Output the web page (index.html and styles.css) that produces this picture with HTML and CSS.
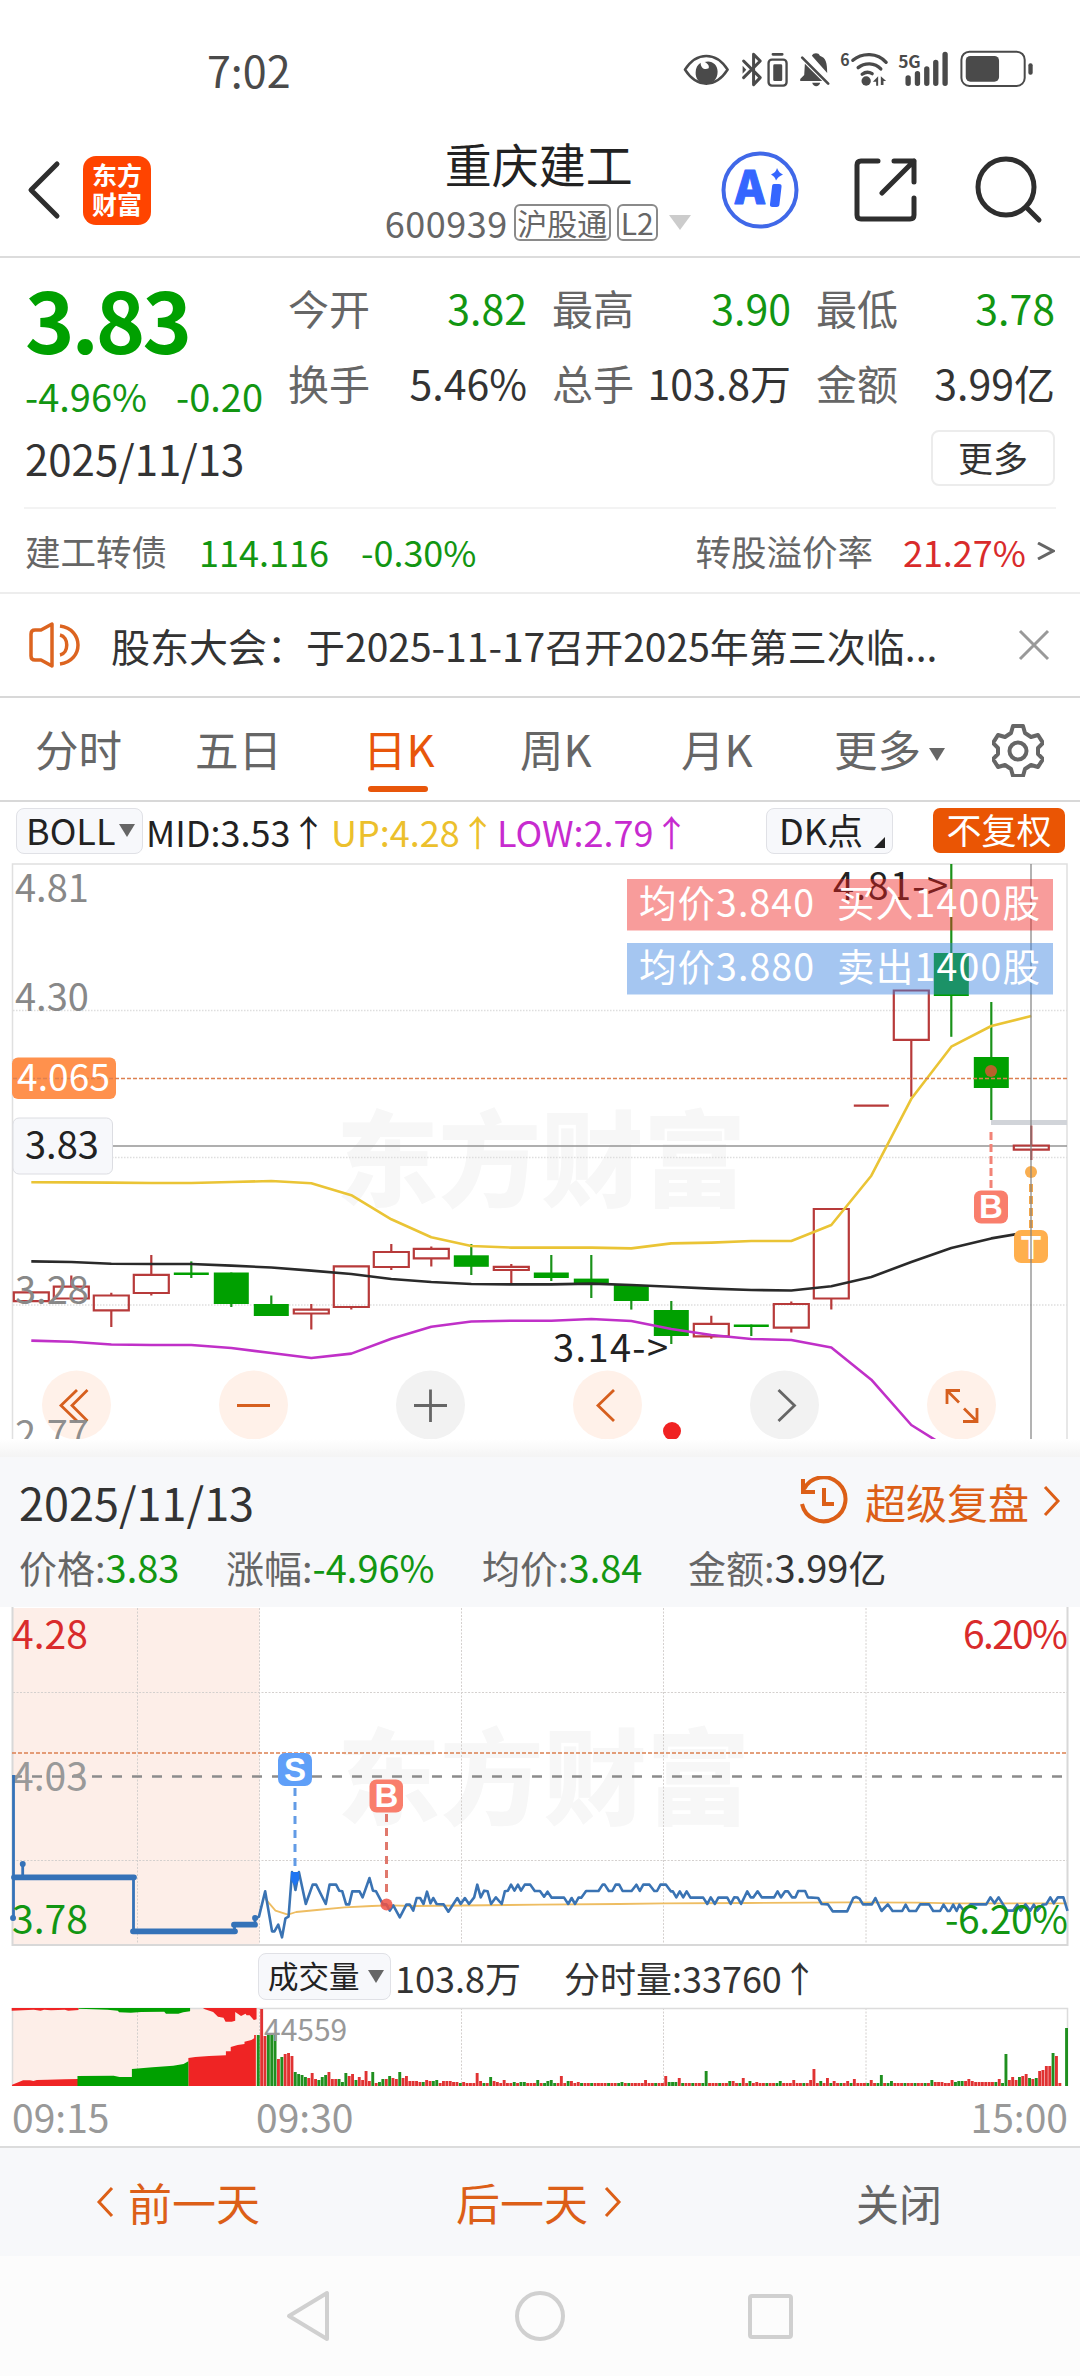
FILE: index.html
```html
<!DOCTYPE html>
<html lang="zh-CN">
<head>
<meta charset="utf-8">
<title>重庆建工 600939</title>
<link rel="stylesheet" href="styles.css">
</head>
<body>
<div class="status">
  <span class="clock">7:02</span>
  <svg class="status-icons" viewBox="60 50 1070 130">
    <g fill="none" stroke="#4a4a4a" stroke-width="8" stroke-linecap="round" stroke-linejoin="round">
      <path d="M74 118C92 90 114 77 138 77s46 13 64 41c-18 28-40 42-64 42s-46-14-64-42z"/>
      <path d="M250 92l50 50-20 21V72l20 20-50 50" stroke-width="9"/>
      <rect x="325" y="88" width="54" height="78" rx="10" stroke-width="7"/>
      <path d="M338 72h28M426 82l78 78" />
      <path d="M578 90c28-24 74-24 100 6M594 112c20-16 50-16 68 4M606 132c10-8 20-8 30-2" stroke-width="10"/>
      <rect x="904" y="64" width="190" height="103" rx="24" stroke-width="6"/>
      <path d="M744 143v16M772 130v29M800 116v43M827 96v63M855 72v87" stroke-width="16"/>
    </g>
    <g fill="#4a4a4a">
      <path d="M121 97c0 16 12 23 24 17 3-8-3-15-12-19 20-7 39 7 39 29 0 24-16 36-36 36s-31-16-30-34c0-14 6-23 15-29z"/>
      <rect x="339" y="102" width="27" height="50" rx="4"/>
      <path d="M247 106l11 12-11 12z"/>
      <path d="M455 76c4-10 21-10 24 0 18 6 22 20 22 52zM434 100l52 52h-66v-6l12-12zM456 157h24c-3 14-21 14-24 0z"/>
      <circle cx="618" cy="152" r="14"/>
      <path d="M638 154l16-16v28h-6v-12zM662 138l16 14h-8v12h-8z"/>
      <rect x="917" y="77" width="100" height="77" rx="14"/>
      <rect x="1105" y="99" width="13" height="34" rx="6"/>
    </g>
    <text x="540" y="107" class="st-text" textLength="28" lengthAdjust="spacingAndGlyphs">6</text>
    <text x="714" y="113" class="st-text" textLength="68" lengthAdjust="spacingAndGlyphs">5G</text>
  </svg>
</div>

<header class="header">
  <svg class="back" viewBox="0 0 36 60"><path d="M32 4L6 30l26 26"/></svg>
  <div class="logo"><span>东方</span><span>财富</span></div>
  <div class="title-box">
    <div class="title">重庆建工</div>
    <div class="code"><span class="code-no">600939</span><span class="tag">沪股通</span><span class="tag tag-l2">L2</span><i class="tri-down"></i></div>
  </div>
  <svg class="ai" viewBox="0 0 80 80">
    <circle cx="40" cy="40" r="36.5"/>
    <text x="15" y="54" class="ai-a">A</text>
    <path d="M52 34h7q3 0 2.500 3l-2 17q0 3-3 3h-4q-3 0-2.500-3l2-17q0-3 2-3z"/>
    <path d="M57 18q2 5 6 6.500q-5 2-7 6q-1-4-5-6q5-2 6-6.500z"/>
  </svg>
  <svg class="share" viewBox="0 0 64 64"><path d="M24 3H7q-4 0-4 4v50q0 4 4 4h49q4 0 4-4V40M40 3h20v21M60 3L28 35"/></svg>
  <svg class="search" viewBox="0 0 68 68"><circle cx="31" cy="31" r="28"/><path d="M51 51l13 13"/></svg>
</header>

<section class="quote">
  <div class="quote-top">
    <div class="price-col">
      <div class="price">3.83</div>
      <div class="chg"><span>-4.96%</span><span>-0.20</span></div>
    </div>
    <div class="stats">
      <div class="stat"><span>今开</span><b class="g">3.82</b></div>
      <div class="stat"><span>最高</span><b class="g">3.90</b></div>
      <div class="stat"><span>最低</span><b class="g">3.78</b></div>
      <div class="stat"><span>换手</span><b>5.46%</b></div>
      <div class="stat"><span>总手</span><b>103.8万</b></div>
      <div class="stat"><span>金额</span><b>3.99亿</b></div>
    </div>
  </div>
  <div class="quote-date"><span>2025/11/13</span><span class="more-btn">更多</span></div>
</section>

<section class="bond">
  <span class="bond-name">建工转债</span><span class="g bond-v">114.116</span><span class="g bond-c">-0.30%</span>
  <span class="bond-name prem">转股溢价率</span><span class="r">21.27%</span>
  <svg class="gt" viewBox="0 0 18 18"><path d="M1 1l15 8-15 8"/></svg>
</section>

<section class="notice">
  <svg class="speaker" viewBox="0 0 52 46"><path d="M2 12q0-4 4-4h6L23 2v42L12 38H6q-4 0-4-4zM31 13c9 2 9 18 0 20M31 4c24 3 24 35 0 38"/></svg>
  <span class="notice-text">股东大会：于2025-11-17召开2025年第三次临...</span>
  <svg class="close" viewBox="0 0 32 32"><path d="M2 2l28 28M30 2L2 30"/></svg>
</section>

<nav class="tabs">
  <span>分时</span><span>五日</span><span class="on">日K</span><span>周K</span><span>月K</span><span>更多<i class="tri-sm"></i></span>
  <svg class="gear" viewBox="0 0 52 54"><path d="M21 3h10l2 7 6 4 7-2 5 8-5 5v6l5 5-5 8-7-2-6 4-2 7H21l-2-7-6-4-7 2-5-8 5-5v-6l-5-5 5-8 7 2 6-4z"/><circle cx="26" cy="28" r="8.500"/></svg>
</nav>

<section class="indic">
  <span class="pill">BOLL<i class="tri-sm"></i></span>
  <span class="i-mid">MID:3.53<em>↑</em></span><span class="i-up">UP:4.28<em>↑</em></span><span class="i-low">LOW:2.79<em>↑</em></span>
  <span class="pill dk">DK点<i class="corner"></i></span>
  <span class="fuquan">不复权</span>
</section>

<svg class="kline" viewBox="0 859 1080 580">
  <text class="wm" x="336" y="1199" textLength="410" lengthAdjust="spacingAndGlyphs">东方财富</text>
  <path class="grid" d="M13 1010.500H1067M13 1157.500H1067M13 1305H1067"/>
  <path class="frame" d="M12.500 1439V864H1067V1439"/>
  <path class="cross-h" d="M13 1146H1067"/>
  <g id="candles"></g>
  <path d="M991 1122.500H1067" stroke="#d1d4d9" stroke-width="5"/>
  <g id="boll"></g>
  <g class="ylab">
    <text x="15" y="902">4.81</text><text x="15" y="1011">4.30</text><text x="15" y="1304">3.28</text>
  </g>
  <text class="mark" x="833" y="900" textLength="115">4.81-&gt;</text>
  <text class="mark" x="553" y="1362" textLength="115">3.14-&gt;</text>
  <rect x="12" y="1057.500" width="104" height="41.500" rx="6" fill="#ff914d"/>
  <path class="cost" d="M13 1078.500H1067"/>
  <text x="17" y="1091" font-size="37" fill="#fff" textLength="93">4.065</text>
  <rect x="13" y="1118" width="99.500" height="56" rx="6" fill="#f7f8fb" stroke="#dcdde2"/>
  <text x="25" y="1159" font-size="38" fill="#222">3.83</text>
  <circle cx="991" cy="1071" r="6" fill="#b8622a"/>
  <path d="M991 1132V1188" stroke="#f28377" stroke-width="3" stroke-dasharray="8 4"/>
  <rect x="974" y="1190.500" width="34" height="33" rx="7" fill="#f97e6c"/>
  <text class="badge" x="991" y="1218">B</text>
  <circle cx="1031" cy="1172" r="6" fill="#f9ae50"/>
  <path d="M1031 1184V1230" stroke="#f2a64a" stroke-width="4" stroke-dasharray="8 4"/>
  <rect x="1014" y="1230" width="34" height="33" rx="7" fill="#ffaf4d"/>
  <text class="badge" x="1031" y="1259">T</text>
  <path d="M1031 864V1439" stroke="#808080" stroke-opacity=".6" stroke-width="2"/>
  <rect x="627" y="879" width="426" height="51.500" fill="#ef201e" fill-opacity=".444"/>
  <rect x="627" y="943" width="426" height="51.500" fill="#3b82e0" fill-opacity=".46"/>
  <g class="trade">
    <text x="639" y="917" textLength="175">均价3.840</text><text x="837" y="917" textLength="203">买入1400股</text>
    <text x="639" y="981" textLength="175">均价3.880</text><text x="837" y="981" textLength="203">卖出1400股</text>
  </g>
  <g fill="#fff1e9"><circle cx="76.500" cy="1405" r="34.500"/><circle cx="253.500" cy="1405" r="34.500"/><circle cx="607.500" cy="1405" r="34.500"/><circle cx="961.500" cy="1405" r="34.500"/></g>
  <g fill="#f2f2f2"><circle cx="430.500" cy="1405" r="34.500"/><circle cx="784.500" cy="1405" r="34.500"/></g>
  <path class="ic-o" d="M77 1390L61 1405.500l16 15.500M87.500 1390L72 1405.500l15.500 15.500M237 1405.500h33M614 1390l-16 15.500 16 15.500M947 1404v-13.500h13M947 1390.500l12 12M977 1408v13.500h-14M977 1421.500l-13-13"/>
  <path class="ic-g" d="M414 1405.500h33M430.500 1389.500v32.500M778.500 1390l16 15.500-16 15.500"/>
  <circle cx="672" cy="1431" r="9" fill="#f02222"/>
  <text class="y-last" x="15" y="1448">2.77</text>
</svg>
<div class="shade"></div>

<section class="replay">
  <div class="replay-head">
    <span class="replay-date">2025/11/13</span>
    <span class="replay-link">
      <svg class="history" viewBox="0 0 50 50"><path d="M5 13A22 22 0 1 1 3 28M4 3v13h12M25 12v16h10"/></svg>
      超级复盘
      <svg class="chev" viewBox="0 0 18 32"><path d="M2 2l13 14L2 30"/></svg>
    </span>
  </div>
  <div class="replay-row">
    <span>价格:<b class="g">3.83</b></span><span>涨幅:<b class="g">-4.96%</b></span><span>均价:<b class="g">3.84</b></span><span>金额:<b>3.99亿</b></span>
  </div>
</section>

<svg class="minute" viewBox="0 1607 1080 341">
  <rect x="13" y="1608" width="246.500" height="337" fill="#fdeee8"/>
  <text class="wm" x="337" y="1817" textLength="413" lengthAdjust="spacingAndGlyphs">东方财富</text>
  <path class="grid2" d="M137.500 1608V1944M259.500 1608V1944M461.500 1608V1944M663.500 1608V1944M866 1608V1944M13 1692.500H1067M13 1860.500H1067"/>
  <path d="M12.500 1607V1945H1067.500V1607" fill="none" stroke="#d8d8d8" stroke-width="2"/>
  <path class="cost" d="M12 1753H1067"/>
  <path d="M12 1776.500H1067" stroke="#8c8c8c" stroke-width="2.500" stroke-dasharray="10 10"/>
  <text class="ml" x="12" y="1791" fill="#999">4.03</text>
  <g class="auction"><path d="M13.500 1775V1918M22.700 1864V1877M133.500 1877V1931M234.500 1931V1925M255 1924V1918H258"/>
  <path class="thick" d="M14 1877.300H134M133 1931.300H235M234 1924.700H255M13 1918h.1M22.700 1864h.1M255 1918h.1"/></g>
  <g transform="translate(0 1590) scale(.34436 .33333)">
    <polyline class="avg" points="770,925 780,938 800,962 836,974 860,966 920,960 1000,952 1080,948 1130,946 1200,948 1568,944 1798,942 1928,940 2168,939 2468,937 2668,938 2768,940 3098,940"/>
    <polyline class="px" points="745,984 752,980 770,904 790,1024 797,1024 808,1004 819,1042 829,985 838,980 848,846 858,900 868,846 888,942 908,884 918,884 946,942 957,884 976,884 985,902 994,904 1005,943 1014,943 1023,904 1044,904 1053,922 1073,864 1083,902 1092,904 1112,943 1122,943 1132,962 1142,946 1161,982 1180,944 1190,944 1200,962 1210,924 1220,924 1230,942 1240,905 1250,940 1258,924 1268,942 1288,943 1302,965 1328,924 1338,942 1350,924 1362,942 1377,922 1386,884 1396,922 1406,902 1416,904 1426,942 1440,922 1457,942 1466,904 1475,902 1484,884 1494,902 1504,884 1513,902 1524,884 1540,884 1553,903 1568,903 1580,920 1590,905 1602,923 1638,923 1650,942 1660,924 1670,942 1680,923 1688,923 1702,903 1738,903 1750,884 1756,884 1768,903 1778,903 1788,884 1798,884 1808,903 1834,903 1848,884 1858,903 1868,884 1886,884 1900,903 1908,903 1918,884 1934,884 1948,904 1954,904 1964,922 1974,904 1984,922 1994,904 2005,923 2042,923 2054,942 2064,922 2076,942 2086,923 2112,923 2122,942 2132,922 2142,923 2152,942 2170,904 2180,922 2188,922 2200,904 2212,922 2248,922 2258,904 2268,922 2280,904 2288,904 2300,922 2310,922 2318,903 2338,903 2346,922 2376,924 2386,942 2404,943 2418,964 2460,964 2478,924 2486,921 2496,926 2506,943 2532,943 2542,924 2560,963 2578,943 2592,963 2620,963 2630,944 2640,963 2660,963 2672,943 2698,943 2710,963 2730,963 2740,944 2752,963 2758,963 2768,944 2778,963 2786,944 2800,964 2818,943 2864,943 2876,922 2888,940 2900,922 2924,962 2942,962 2954,944 2964,962 2978,943 2992,962 3002,944 3012,962 3028,944 3038,943 3050,922 3060,940 3072,922 3088,922 3100,963"/>
  </g>
  <g class="ml">
    <text x="12" y="1649" fill="#d92b2b">4.28</text><text x="1068" y="1649" fill="#d92b2b" text-anchor="end" textLength="105">6.20%</text>
    <text x="12" y="1933.500" fill="#129612">3.78</text><text x="1068" y="1933.500" fill="#129612" text-anchor="end" textLength="123">-6.20%</text>
  </g>
  <path d="M295 1788V1874" stroke="#629be6" stroke-width="3" stroke-dasharray="8 6"/>
  <path d="M291 1872h8v8l-4 6-4-6z" fill="#1f75f2"/>
  <path d="M386.500 1814V1898" stroke="#e0786c" stroke-width="3" stroke-dasharray="8 6"/>
  <circle cx="386.500" cy="1904.500" r="6" fill="#ee5245" fill-opacity=".85"/>
  <rect x="278" y="1753" width="34" height="33" rx="7" fill="#5f9ff8"/><text class="badge" x="295" y="1781">S</text>
  <rect x="369.500" y="1779.500" width="33.500" height="33" rx="7" fill="#f97e6c"/><text class="badge" x="386.500" y="1807">B</text>
</svg>

<section class="vol-head">
  <span class="pill vol">成交量<i class="tri-sm"></i></span><span class="vol-v">103.8万</span><span class="vol-m">分时量:33760<em>↑</em></span>
</section>
<svg class="volume" viewBox="0 2004 1080 84">
  <rect x="13" y="2008" width="246.500" height="78" fill="#fdeee8"/>
  <path class="grid2" d="M137.500 2008V2086M259.500 2008V2086M461.500 2008V2086M663.500 2008V2086M866 2008V2086"/>
  <path d="M12.500 2086V2008.500H1067.500V2086" fill="none" stroke="#dcdcdc" stroke-width="1.500"/>
  <g transform="translate(0 1940) scale(.34436 .33333)">
    <path fill="#ef2424" d="M35 438v-4l20-8 12-5h20l10 2 10-3 30-1 50-1 40-1v21zM547 438v-84l20-3 40-3 49-2v-12h14v-13l20-6 20-3v-7l20-5 8-5v-10h5v153zM34 204h194v6l-30 2-10-3-40 2-20-2-10 3-20-3-64 3zM572 204h173v34l-8 2-12-14h-9l-3-5-13 7-17-12v26l-10 3h-18l-6-12-16-3-14-14-24-8-6-4z"/>
    <path fill="#00a000" d="M225 438v-30l105-1 17 4h36v-24l60-5 60-5 30-5 14-8v74zM228 204h324v10l-20 3-14 4h-36l-5-6-67 1-30 2-34-1-4-5-30-3-40-1-44-2z"/>
  </g>
  <g id="bars"></g>
  <text x="264" y="2040.500" font-size="30" fill="#999">44559</text>
</svg>
<div class="times"><span class="t1">09:15</span><span class="t2">09:30</span><span>15:00</span></div>

<footer class="foot">
  <span class="prev"><svg class="chev" viewBox="0 0 18 32"><path d="M16 2L3 16l13 14"/></svg>前一天</span>
  <span class="next">后一天<svg class="chev" viewBox="0 0 18 32"><path d="M2 2l13 14L2 30"/></svg></span>
  <span class="shut">关闭</span>
</footer>
<div class="sysnav">
  <svg viewBox="0 0 50 54"><path d="M42 4v46L4 27z"/></svg>
  <svg viewBox="0 0 50 54"><circle cx="25" cy="27" r="23"/></svg>
  <svg viewBox="0 0 50 54"><rect x="5" y="7" width="41" height="41" rx="2"/></svg>
</div>
<script src="chart.js"></script>
</body>
</html>
```
FILE: styles.css
```css
* { box-sizing: border-box; }
body { margin: 0; width: 1080px; background: #fff; color: #333; font-family: "Noto Sans CJK SC", "Noto Sans", sans-serif; font-size: 36px; line-height: 1; }
svg { display: block; flex: none; }
b, em, i { font-weight: 400; font-style: normal; }
span { white-space: nowrap; }
.g { color: #129612 !important; }
.r { color: #d92b2b; }

.status { height: 112px; padding: 26px 43px 0 207px; display: flex; align-items: center; justify-content: space-between; }
.clock { font-size: 43px; color: #4a4a4a; }
.status-icons { width: 357px; height: 43.300px; }
.st-text { font: 700 50px "Noto Sans CJK SC", sans-serif; fill: #4a4a4a; }

.header { height: 146px; border-bottom: 2px solid #dcdcdc; display: flex; align-items: center; padding: 12px 37px 0 25px; }
.header svg { fill: none; stroke: #2e2e2e; stroke-width: 5; stroke-linecap: round; stroke-linejoin: round; }
.back { width: 36px; height: 60px; }
.logo { width: 68px; height: 69px; margin-left: 22px; border-radius: 13px; background: #ff4400; color: #fff; display: flex; flex-direction: column; align-items: center; justify-content: center; font-size: 25px; font-weight: 700; line-height: 29px; padding-bottom: 2px; }
.title-box { margin-left: 234px; width: 308px; height: 110px; }
.title { font-size: 47px; line-height: 60px; margin-top: -2px; padding-left: 60px; color: #222; }
.code { display: flex; align-items: center; height: 58px; color: #666; font-size: 36px; }
.code-no { letter-spacing: .5px; }
.tag { border: 2px solid #8a8a8a; border-radius: 6px; height: 37px; width: 97px; line-height: 32px; font-size: 30px; text-align: center; margin-left: 6px; }
.tag-l2 { width: 41px; }
.tri-down { border: 11px solid transparent; border-top: 15px solid #ccc; border-bottom: 0; margin-left: 11px; }
.header .ai { width: 80px; height: 80px; margin-left: 28px; stroke: #4068e8; stroke-width: 4; }
.header .ai path { fill: #3566ff; stroke: none; }
.ai-a { font: 900 45px "Noto Sans CJK SC", sans-serif; fill: #3566ff; stroke: #3566ff; stroke-width: 1; }
.share { width: 64px; height: 64px; margin-left: 54px; }
.search { width: 68px; height: 68px; margin-left: 57px; }

.quote { height: 249px; padding: 0 25px; }
.quote-top { display: flex; height: 162px; }
.price-col { width: 264px; padding-top: 12px; color: #00a000; }
.price { font-size: 84px; font-weight: 700; line-height: 96px; letter-spacing: -3px; }
.chg { display: flex; justify-content: space-between; width: 238px; font-size: 38px; line-height: 58px; color: #129612; margin-top: 1px; }
.stats { flex: 1; display: grid; grid-template-columns: repeat(3, 239px); column-gap: 25px; grid-auto-rows: 75px; padding-top: 12px; }
.stat { display: flex; justify-content: space-between; align-items: center; font-size: 41px; color: #666; }
.stat b { color: #333; }
.quote-date { display: flex; justify-content: space-between; align-items: center; height: 76px; font-size: 42px; }
.more-btn { width: 124px; height: 56px; border: 2px solid #ececec; border-radius: 8px; font-size: 35px; line-height: 49px; text-align: center; }

.bond { height: 85px; margin: 0 24px; border-top: 2px solid #f3f3f3; display: flex; align-items: center; font-size: 36px; padding: 0 1px; }
.bond-name { color: #666; font-size: 35.500px; }
.bond-v { margin-left: 32px; }
.bond-c { margin-left: 32px; }
.prem { margin-left: auto; }
.bond .r { margin-left: 30px; }
.gt { width: 18px; height: 18px; margin-left: 11px; fill: none; stroke: #666; stroke-width: 3; }

.notice { height: 106px; border-top: 2px solid #ededed; border-bottom: 2px solid #d8d8d8; display: flex; align-items: center; padding: 0 30px 0 29px; }
.speaker { width: 52px; height: 46px; fill: none; stroke: #dc6420; stroke-width: 3.500; stroke-linejoin: round; }
.notice-text { font-size: 39px; margin-left: 30px; width: 908px; }
.close { width: 32px; height: 32px; fill: none; stroke: #999; stroke-width: 3; }

.tabs { height: 104px; border-bottom: 2px solid #d8d8d8; display: grid; grid-template-columns: 160px 168px 157px 161px 153px 158px 54px; padding-left: 35px; font-size: 43.500px; color: #666; align-items: center; }
.tabs span { height: 104px; line-height: 102px; }
.tabs .on { color: #e8560a; position: relative; }
.tabs .on::after { content: ""; position: absolute; left: 5px; top: 88px; width: 60px; height: 6px; border-radius: 3px; background: #e8560a; }
.tri-sm { display: inline-block; border: 8px solid transparent; border-top: 13px solid #666; border-bottom: 0; vertical-align: middle; margin: 0 0 2px 8px; }
.gear { width: 52px; height: 54px; fill: none; stroke: #666; stroke-width: 4; stroke-linejoin: round; }

.indic { height: 57px; display: flex; align-items: center; padding-left: 16px; font-size: 36px; }
.pill { display: flex; align-items: center; height: 46px; width: 127px; border: 1.500px solid #e0e1e6; border-radius: 8px; background: #f7f8fb; color: #222; padding: 0 0 3px 9px; }
.pill .tri-sm { margin: 3px 0 0 4px; }
.i-mid { width: 185px; margin-left: 3px; color: #222; }
.i-up { width: 166px; color: #ecc02c; }
.i-low { width: 269px; color: #c72bcf; }
.dk { position: relative; padding-left: 12px; }
.corner { position: absolute; right: 7px; bottom: 5px; border-left: 11px solid transparent; border-bottom: 11px solid #222; }
.fuquan { width: 132px; height: 45px; margin-left: 40px; border-radius: 7px; background: #ea5504; color: #fff; font-size: 35px; line-height: 41px; text-align: center; }

.kline { width: 1080px; height: 580px; }
.wm { font-size: 104px; font-weight: 900; fill: #f7f7f7; }
.grid, .grid2 { fill: none; stroke: #dedede; stroke-width: 1.500; stroke-dasharray: 1.500 1.500; }
.grid2 { stroke: #d4d0ce; stroke-width: 1; stroke-dasharray: 2 1.500; }
.frame { fill: none; stroke: #e0e0e0; stroke-width: 1.500; }
.cross-h { stroke: #959595; stroke-width: 1.500; }
.cost { stroke: #dc8050; stroke-width: 1.500; stroke-dasharray: 4 2; }
.ylab, .y-last { font-size: 38px; fill: #888; }
.y-last { fill-opacity: .95; }
.mark { font-size: 38px; fill: #222; }
.trade { font-size: 37.500px; fill: #fff; }
.badge { font: 700 33px "Liberation Sans", sans-serif; fill: #fff; text-anchor: middle; }
.ic-o, .ic-g { fill: none; stroke: #d65f1e; stroke-width: 2.800; }
.ic-g { stroke: #666; }
.up { fill: none; stroke: #b73a3a; stroke-width: 2.200; }
.down { fill: #00a000; stroke: none; }
.wick-down { stroke: #1a921a; stroke-width: 2.200; }
.boll { fill: none; stroke-width: 2.600; stroke-linejoin: round; }

.shade { height: 18px; background: linear-gradient(#fff, #f4f4f4); }
.replay { height: 150px; background: #f7f8fa; padding: 14px 19px 0 19px; }
.replay-head { display: flex; align-items: center; justify-content: space-between; height: 60px; }
.replay-date { font-size: 45px; }
.replay-link { display: flex; align-items: center; font-size: 41px; color: #dc5f17; }
.history { width: 50px; height: 50px; margin-right: 16px; fill: none; stroke: #dc5f17; stroke-width: 4; }
.chev { width: 18px; height: 32px; fill: none; stroke: #dc5f17; stroke-width: 3; }
.replay-link .chev { margin-left: 14px; }
.replay-row { display: grid; grid-template-columns: 207px 256px 206px auto; font-size: 38px; line-height: 72px; color: #666; }
.replay-row b { color: #333; }

.minute { width: 1080px; height: 341px; }
.ml { font-size: 39px; }
.auction path { fill: none; stroke: #3572b8; stroke-width: 2.800; }
.auction .thick { stroke-width: 5.800; stroke-linecap: round; }
.avg, .px { fill: none; vector-effect: non-scaling-stroke; stroke: #eebd62; stroke-width: 1.800; stroke-linejoin: round; }
.px { stroke: #3a73b3; stroke-width: 2.600; }

.vol-head { height: 56px; display: flex; align-items: center; padding-left: 258px; padding-top: 1px; }
.vol { width: 133px; height: 47px; font-size: 30.500px; }
.vol .tri-sm { margin-left: 8px; }
.vol-v { margin-left: 4px; }
.vol-m { margin-left: 43px; }
.volume { width: 1080px; height: 84px; }
.times { display: flex; height: 58px; padding: 0 12px; font-size: 39px; line-height: 56px; color: #999; }
.t1 { width: 244px; }
.t2 { flex: 1; }

.foot { height: 110px; background: #f7f8fa; border-top: 2px solid #dcdcdc; display: flex; align-items: center; font-size: 44px; color: #dc5f17; }
.foot span { display: flex; align-items: center; }
.prev { margin-left: 96px; width: 360px; }
.prev .chev { margin-right: 14px; }
.next { width: 400px; }
.next .chev { margin-left: 16px; }
.shut { color: #666; font-size: 43px; }
.sysnav { height: 120px; background: #fcfcfc; display: flex; justify-content: center; align-items: center; gap: 180px; }
.sysnav svg { width: 50px; height: 54px; fill: none; stroke: #d0d0d0; stroke-width: 4; stroke-linejoin: round; }
```
FILE: chart.js
```js
const NS = 'http://www.w3.org/2000/svg';
function add(parent, tag, attrs) {
  const el = document.createElementNS(NS, tag);
  for (const k in attrs) el.setAttribute(k, attrs[k]);
  parent.appendChild(el);
}

// [direction, body top, body bottom, wick high, wick low], one per trading day
const days = [
  ['u',1292.4,1301.2,1292.4,1301.2],['u',1286.7,1298.5,1275.6,1298.5],['u',1295.5,1310.4,1292.8,1327],
  ['u',1274.8,1293,1255,1295.5],['d',1272.5,1275,1261.4,1278],['d',1272.5,1304,1272.5,1307],
  ['d',1304,1316,1295.5,1316],['u',1309.6,1313.5,1304,1329.5],['u',1266.4,1307,1266.4,1309.6],
  ['u',1252,1267,1244,1270],['u',1248.8,1258.3,1246.5,1266.4],['d',1255.3,1266.8,1244,1275],
  ['u',1266.8,1270,1264,1283.6],['d',1272.5,1278,1255,1281],['d',1278.6,1284,1255,1298],
  ['d',1285,1301,1285,1309.6],['d',1310,1336,1301,1344],['u',1323.8,1336.4,1315.7,1338.7],
  ['d',1324.5,1327,1324.5,1336],['u',1304,1327.6,1301.6,1332.6],['u',1209,1298.5,1209,1309.6],
  ['u',1105.6,1105.6,1105.6,1105.6],['u',990.5,1039.8,990.5,1096.8],['d',953,996,864,1036.8],
  ['d',1057,1088,1002,1120],['u',1145.5,1149.7,1125.5,1160]
];
const candles = document.getElementById('candles');
days.forEach(([dir, top, bot, hi, lo], i) => {
  const x = 31.3 + i * 40;
  if (dir === 'u') {
    add(candles, 'path', { class: 'up', d: `M${x - 17.5} ${top}h35V${bot}h-35zM${x} ${hi}V${top}M${x} ${bot}V${lo}` });
  } else {
    add(candles, 'path', { class: 'wick-down', d: `M${x} ${hi}V${lo}` });
    add(candles, 'rect', { class: 'down', x: x - 17.5, y: top, width: 35, height: bot - top });
  }
});

const bands = {
  '#eac435': [1182.2,1182.4,1182.6,1183,1183,1182,1181,1183.3,1195.2,1219.3,1237.3,1246,1247.6,1247.6,1247.6,1248.4,1243.4,1242.6,1241,1241,1225,1175.7,1098.8,1046.7,1026,1016],
  '#2a2a2a': [1261.4,1262,1263.7,1264,1264,1265.6,1267.5,1270.6,1274,1279,1282,1284,1284.4,1284.4,1283.6,1285,1286.7,1288.6,1290,1290.5,1286.3,1277,1262,1248,1238.4,1231.6],
  '#c030c8': [1340.6,1341.8,1344.5,1345,1345,1348,1353,1358,1353.6,1338.7,1326.8,1321.5,1320.7,1320.7,1319,1321,1329,1335,1339,1340,1347.5,1379.7,1425,1450]
};
for (const color in bands) {
  add(document.getElementById('boll'), 'polyline', {
    class: 'boll', stroke: color,
    points: bands[color].map((y, i) => `${31.3 + i * 40},${y}`).join(' ')
  });
}

// minute volumes: opening stretch in full, later minutes only where they stand out
const open = 'g51 r77 r50 g53 g51 g51 r27 g29 r32 r33 r30 g14 g12 g11 g9 r8 r13 r7 g6 g9 g11 r14 r7 r7 g7 g4 g13 r10 r12 g6 r9 r6 r15 r5 g14 r3 g4 g7 r7 g10 r8 r7 g14 r8 r10 r5 r5 r5 r4 g4 r6 r5 g5 g6 r3 r5 r5 r5 r4 r4 g3 r4 r3 r3 r3 r13 r5 g3 r3 g9 r5 r4 r3 r6 r3 r3 g4 r3 g4 g4 r3 r3 r3 g6 r3'.split(' ');
const later = {86:'g5',87:'g6',90:'r10',92:'g5',93:'r5',95:'r4',108:'g4',115:'r6',121:'r10',122:'g4',123:'g4',124:'g4',125:'r8',133:'g15',140:'g5',141:'r5',144:'r8',146:'g5',148:'r4',155:'g5',159:'r6',164:'r6',165:'r17',167:'g5',169:'r8',171:'r5',175:'r5',177:'r7',182:'r6',185:'g11',188:'g5',200:'g6',201:'r4',202:'r4',203:'r4',206:'r6',207:'g4',208:'g5',209:'g5',210:'r5',211:'r7',212:'r5',213:'r4',214:'r4',215:'r4',216:'r4',217:'r4',218:'r4',219:'g4',220:'r7',221:'g3',222:'g32',223:'r6',224:'r9',225:'r6',226:'g9',227:'r10',228:'r12',229:'g8',230:'r7',231:'g8',232:'r15',233:'r16',234:'r20',235:'r20',236:'g33',237:'r30',238:'r3',240:'g58'};
const bars = document.getElementById('bars');
for (let i = 0; i <= 240; i++) {
  if (i === 239) continue;
  const v = open[i] || later[i] || ((i * 7) % 11 < 3 ? 'g3' : 'r3');
  const h = +v.slice(1);
  add(bars, 'rect', { x: (256.8 + i * 3.368).toFixed(1), y: 2086 - h, width: 2.9, height: h, fill: v[0] === 'g' ? '#1f8f1f' : '#e03232' });
}
```
